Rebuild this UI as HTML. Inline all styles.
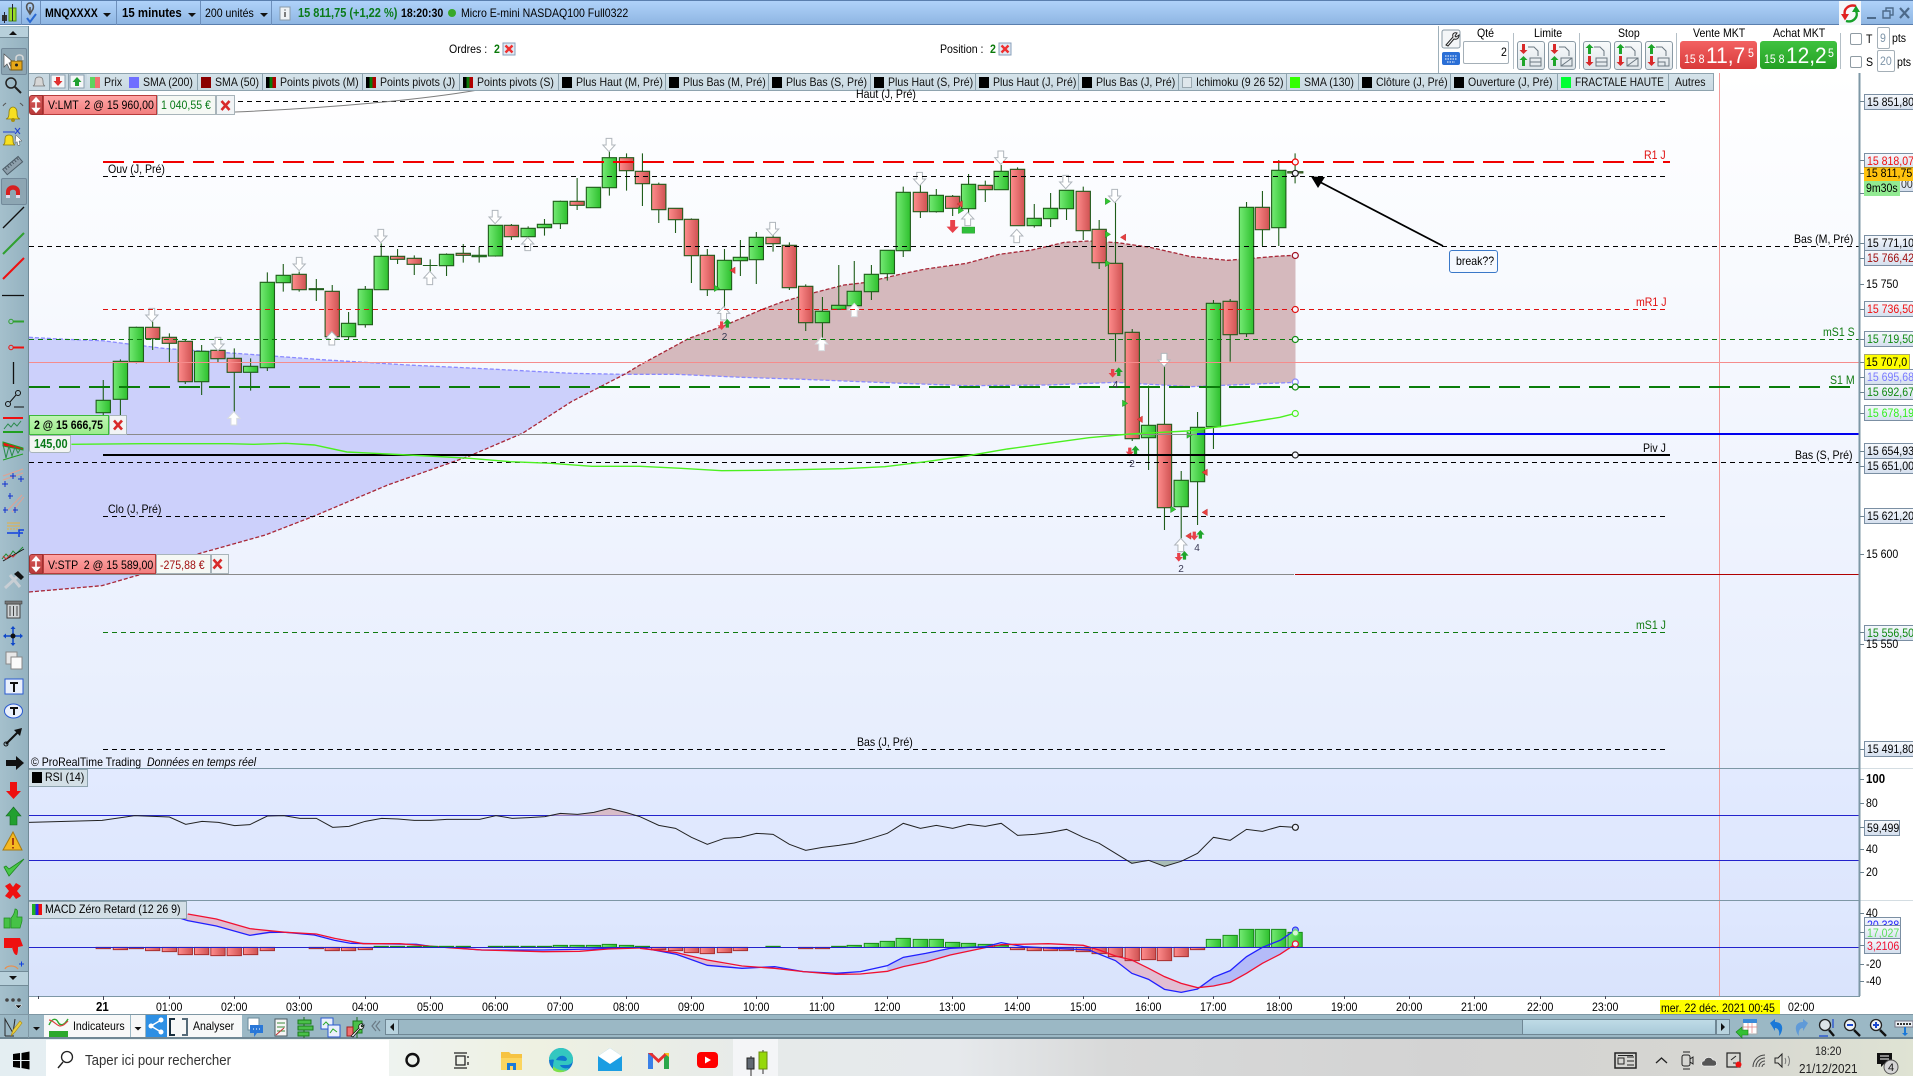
<!DOCTYPE html>
<html><head><meta charset="utf-8"><title>Chart</title>
<style>
html,body{margin:0;padding:0;width:1913px;height:1076px;overflow:hidden;background:#fff}
#p{position:relative;width:1913px;height:1076px;overflow:hidden;font-family:"Liberation Sans",sans-serif;color:#000}
.a{position:absolute}
.t{position:absolute;white-space:pre;font:12px/14px "Liberation Sans",sans-serif;transform:scaleX(.88);transform-origin:0 50%}
.k{position:absolute;top:73px;height:16px;background:linear-gradient(#d5e3ea,#c9d9e2);border:1px solid #8ea3ae;border-left:0}
.k b{position:absolute;left:3px;top:3px;width:10px;height:11px;display:block}
.k i{position:absolute;left:17px;top:1px;font:12px/14px "Liberation Sans",sans-serif;white-space:pre;transform:scaleX(.88);transform-origin:0 50%;color:#111}
.b{position:absolute;left:1864px;width:60px;height:14px;border:1px solid #7b8fa3;background:linear-gradient(#f6f9fd,#d5dfee)}
.b i{position:absolute;left:2px;top:0;font:12px/14px "Liberation Sans",sans-serif;font-style:normal;white-space:pre;transform:scaleX(.88);transform-origin:0 50%}
.tb{position:absolute;top:41px;width:26px;height:27px;border:1px solid #8a9aa5;border-radius:3px;background:linear-gradient(#f8fafb,#dfe6ea)}
svg{position:absolute;left:0;top:0;overflow:visible}
rect.g,rect.r,.nss{vector-effect:non-scaling-stroke}
rect.g{fill:url(#gg);stroke:#1f5d1a;stroke-width:1.1}
rect.r{fill:url(#rg);stroke:#245a1c;stroke-width:1.1}
rect.hg{fill:url(#gg);stroke:#1a8a1a;stroke-width:1;vector-effect:non-scaling-stroke}
rect.hr{fill:url(#rg);stroke:#a83030;stroke-width:1;vector-effect:non-scaling-stroke}
.w{fill:none;stroke:#1f5d1a;stroke-width:1.1;vector-effect:non-scaling-stroke}
</style></head><body><div id="p">

<!-- top bar -->
<div class="a" style="left:0;top:0;width:1913px;height:25px;background:linear-gradient(#afd2fa,#8fb6e2);border-top:1px solid #5a7fae;border-bottom:1px solid #5a7fae;box-sizing:border-box"></div>
<div class="a" style="left:21px;top:1px;width:1px;height:24px;background:#6d8fbb"></div>
<div class="a" style="left:40px;top:1px;width:1px;height:24px;background:#6d8fbb"></div>
<div class="a" style="left:116px;top:1px;width:1px;height:24px;background:#6d8fbb"></div>
<div class="a" style="left:200px;top:1px;width:1px;height:24px;background:#6d8fbb"></div>
<div class="a" style="left:271px;top:1px;width:1px;height:24px;background:#6d8fbb"></div>
<span class="t" style="left:45px;top:6px;font-weight:bold">MNQXXXX</span>
<span class="t" style="left:122px;top:6px;font-weight:bold;font-size:13px">15 minutes</span>
<span class="t" style="left:205px;top:6px">200 unités</span>
<span class="t" style="left:298px;top:6px;font-weight:bold;font-size:12.5px;color:#0a7a1a">15 811,75 (+1,22 %)</span>
<span class="t" style="left:401px;top:6px;font-weight:bold">18:20:30</span>
<span class="t" style="left:461px;top:6px">Micro E-mini NASDAQ100 Full0322</span>
<div class="a" style="left:1839px;top:1px;width:22px;height:24px;background:#f4f7fa"></div>

<!-- white header + trading panel -->
<span class="t" style="left:449px;top:42px;">Ordres :</span>
<span class="t" style="left:494px;top:42px;font-weight:bold;color:#0a7a0a">2</span>
<span class="t" style="left:940px;top:42px;">Position :</span>
<span class="t" style="left:990px;top:42px;font-weight:bold;color:#0a7a0a">2</span>
<div class="a" style="left:1438px;top:26px;width:1px;height:47px;background:#9fb0ba"></div>
<span class="t" style="left:1477px;top:26px">Qté</span>
<span class="t" style="left:1534px;top:26px">Limite</span>
<span class="t" style="left:1618px;top:26px">Stop</span>
<span class="t" style="left:1693px;top:26px">Vente MKT</span>
<span class="t" style="left:1773px;top:26px">Achat MKT</span>
<div class="a" style="left:1463px;top:41px;width:44px;height:21px;border:1px solid #a4afb7;border-radius:2px;background:#fff"></div>
<span class="t" style="left:1501px;top:45px">2</span>
<div class="a" style="left:1513px;top:33px;width:1px;height:36px;background:#b4bfc6"></div>
<div class="a" style="left:1579px;top:33px;width:1px;height:36px;background:#b4bfc6"></div>
<div class="a" style="left:1676px;top:33px;width:1px;height:36px;background:#b4bfc6"></div>
<div class="a" style="left:1840px;top:33px;width:1px;height:36px;background:#b4bfc6"></div>
<div class="tb" style="left:1517px"></div><div class="tb" style="left:1548px"></div>
<div class="tb" style="left:1583px"></div><div class="tb" style="left:1614px"></div><div class="tb" style="left:1645px"></div>
<div class="a" style="left:1680px;top:41px;width:77px;height:28px;border-radius:3px;background:linear-gradient(#f26262,#d93a3a)"></div>
<div class="a" style="left:1760px;top:41px;width:77px;height:28px;border-radius:3px;background:linear-gradient(#3fc23f,#25a025)"></div>
<span class="t" style="left:1684px;top:52px;color:#fff;font-size:12px">15 8</span>
<span class="t" style="left:1706px;top:44px;color:#fff;font-size:22px;line-height:24px;transform:scaleX(.95)">11,7</span>
<span class="t" style="left:1748px;top:46px;color:#fff;font-size:12px">5</span>
<span class="t" style="left:1764px;top:52px;color:#fff;font-size:12px">15 8</span>
<span class="t" style="left:1786px;top:44px;color:#fff;font-size:22px;line-height:24px;transform:scaleX(.95)">12,2</span>
<span class="t" style="left:1828px;top:46px;color:#fff;font-size:12px">5</span>
<div class="a" style="left:1850px;top:33px;width:10px;height:10px;border:1px solid #8f9ba3;border-radius:2px;background:#fff"></div>
<div class="a" style="left:1850px;top:56px;width:10px;height:10px;border:1px solid #8f9ba3;border-radius:2px;background:#fff"></div>
<span class="t" style="left:1866px;top:32px">T</span>
<span class="t" style="left:1866px;top:55px">S</span>
<div class="a" style="left:1877px;top:27px;width:11px;height:20px;border:1px solid #a4afb7;border-radius:2px;background:#fff"></div>
<div class="a" style="left:1877px;top:50px;width:16px;height:20px;border:1px solid #a4afb7;border-radius:2px;background:#fff"></div>
<span class="t" style="left:1880px;top:31px;color:#7d94a8">9</span>
<span class="t" style="left:1880px;top:54px;color:#7d94a8">20</span>
<span class="t" style="left:1892px;top:31px">pts</span>
<span class="t" style="left:1897px;top:55px">pts</span>

<!-- chart backgrounds -->
<div class="a" style="left:29px;top:73px;width:1830px;height:695px;background:linear-gradient(#ffffff,#e6edfd)"></div>
<div class="a" style="left:29px;top:768px;width:1830px;height:132px;background:linear-gradient(#e2eaff,#dde6fd)"></div>
<div class="a" style="left:29px;top:900px;width:1830px;height:96px;background:linear-gradient(#dfe8fe,#d9e3fc)"></div>
<div class="a" style="left:0;top:1014px;width:1913px;height:25px;background:#9bb8c5;border-top:1px solid #7e97a4;border-bottom:2px solid #6f8794;box-sizing:border-box"></div>

<svg width="1913" height="1076" viewBox="0 0 1913 1076">
<defs>
<linearGradient id="gg" x1="0" x2="1" y1="0" y2="0"><stop offset="0" stop-color="#74ea74"/><stop offset="1" stop-color="#2ec02e"/></linearGradient>
<linearGradient id="rg" x1="0" x2="1" y1="0" y2="0"><stop offset="0" stop-color="#ff8d8d"/><stop offset="1" stop-color="#cf5252"/></linearGradient>
<path id="dn" class="nss" d="M-7,-20h14v20h8l-15,20l-15,-20h8z" fill="#fff" stroke="#b0b6bc" stroke-width="1"/>
<path id="up" class="nss" d="M-7,20h14v-20h8l-15,-20l-15,20h8z" fill="#fff" stroke="#b0b6bc" stroke-width="1"/>
<path id="upw" class="nss" d="M-7,20h14v-20h8l-15,-20l-15,20h8z" fill="#fff" stroke="#d8dce0" stroke-width="1"/>
<path id="rd" d="M-4,-13h8v12h6l-10,14l-10,-14h6z" fill="#e8404a"/>
<path id="gu" d="M-4,13h8v-12h6l-10,-14l-10,14h6z" fill="#1ea52a"/>
<path id="tg" d="M-5,-10L8,0L-5,10z" fill="#30c830" stroke="#1a7a1a" stroke-width="1"/>
<path id="tr" d="M5,-10L-8,0L5,10z" fill="#e84040" stroke="#b02020" stroke-width="1"/>
</defs>

<!-- cloud + candles in zoom coordinates -->
<g transform="translate(0 130) scale(.40816 .33333)">
<polygon fill="#ccd0fb" points="71,622 160,628 250,632 400,655 600,672 800,690 1000,705 1200,717 1400,730 1530,733 1400,815 1280,910 1150,978 1100,1000 950,1065 770,1158 650,1215 490,1270 340,1335 250,1367 71,1386"/>
<polygon fill="#d5b9bd" points="1530,733 1568,705 1688,625 1768,590 1868,538 1918,515 1988,490 2068,465 2118,458 2208,432 2268,417 2368,400 2448,373 2528,360 2608,337 2668,333 2738,338 2818,352 2918,380 3008,391 3136,378 3174,376 3174,757 2918,770 2733,757 2568,765 2368,767 2168,758 1968,748 1818,742 1658,733 1568,733"/>
<polyline class="nss" fill="none" stroke="#8a8aff" stroke-width="1.3" stroke-dasharray="4 2" points="71,622 160,628 250,632 400,655 600,672 800,690 1000,705 1200,717 1400,730 1530,733 1568,733 1658,733 1818,742 1968,748 2168,758 2368,767 2568,765 2733,757 2918,770 3174,757"/>
<polyline class="nss" fill="none" stroke="#a82838" stroke-width="1.3" stroke-dasharray="4 2" points="71,1386 250,1367 340,1335 490,1270 650,1215 770,1158 950,1065 1100,1000 1150,978 1280,910 1400,815 1530,733 1568,705 1688,625 1768,590 1868,538 1918,515 1988,490 2068,465 2118,458 2208,432 2268,417 2368,400 2448,373 2528,360 2608,337 2668,333 2738,338 2818,352 2918,380 3008,391 3136,378 3174,376"/>

<path class="w" d="M253 750V811M253 848V860M295 688V694M295 808V860M334 590V592M334 695V700M374 575V592M374 626V660M415 610V622M415 640V698M454 630V634M454 755V762M494 645V664M494 755V795M534 655V661M534 686V698M574 655V685M574 727V845M614 685V709M614 727V782M655 427V457M655 713V723M694 402V436M694 458V485M733 425V433M733 479V485M775 447V513M814 465V484M814 620V625M854 546V580M854 620V628M895 468V478M895 584V593M934 340V379M974 357V402M1015 376V385M1015 403V435M1054 388V425M1036 406.5H1072M1094 370V373M1094 407V438M1135 342V398M1174 350V398M1214 285V286M1214 378V380M1253 282V286M1253 320V330M1294 289V295M1334 267V283M1334 293V317M1373 212V214M1373 281V297M1414 144V214M1414 226V240M1493 65V83M1493 173V197M1535 70V83M1535 122V182"/>
<rect class="g" x="235.5" y="811" width="35" height="37"/><rect class="g" x="277.5" y="694" width="35" height="114"/><rect class="g" x="316.5" y="592" width="35" height="103"/><rect class="r" x="356.5" y="592" width="35" height="34"/><rect class="r" x="397.5" y="622" width="35" height="18"/><rect class="r" x="436.5" y="634" width="35" height="121"/><rect class="g" x="476.5" y="664" width="35" height="91"/><rect class="r" x="516.5" y="661" width="35" height="25"/><rect class="r" x="556.5" y="685" width="35" height="42"/><rect class="g" x="596.5" y="709" width="35" height="18"/><rect class="g" x="637.5" y="457" width="35" height="256"/><rect class="g" x="676.5" y="436" width="35" height="22"/><rect class="r" x="715.5" y="433" width="35" height="46"/><rect class="g" x="757.5" y="476" width="35" height="3"/><rect class="r" x="796.5" y="484" width="35" height="136"/><rect class="g" x="836.5" y="580" width="35" height="40"/><rect class="g" x="877.5" y="478" width="35" height="106"/><rect class="g" x="916.5" y="379" width="35" height="100"/><rect class="r" x="956.5" y="379" width="35" height="9"/><rect class="r" x="997.5" y="385" width="35" height="18"/><rect class="g" x="1076.5" y="373" width="35" height="34"/><rect class="r" x="1117.5" y="370" width="35" height="6"/><rect class="g" x="1156.5" y="376" width="35" height="4"/><rect class="g" x="1196.5" y="286" width="35" height="92"/><rect class="r" x="1235.5" y="286" width="35" height="34"/><rect class="g" x="1276.5" y="295" width="35" height="25"/><rect class="g" x="1316.5" y="283" width="35" height="10"/><rect class="g" x="1355.5" y="214" width="35" height="67"/><rect class="r" x="1396.5" y="214" width="35" height="12"/><rect class="g" x="1436.5" y="172" width="35" height="61"/><rect class="g" x="1475.5" y="83" width="35" height="90"/><rect class="r" x="1517.5" y="83" width="35" height="39"/>
<use href="#dn" x="372" y="555"/><use href="#dn" x="733" y="402"/><use href="#dn" x="534" y="642"/><use href="#dn" x="933" y="318"/><use href="#dn" x="1213" y="261"/><use href="#dn" x="1492" y="45"/>
<use href="#up" x="813" y="625"/><use href="#up" x="1053" y="444"/><use href="#up" x="1293" y="342"/><use href="#upw" x="573" y="865"/>

<g transform="translate(1568 0)">
<path class="w" d="M6 70V124M6 161V228M46 158V163M46 239V279M87 269V309M126 265V268M126 377V459M165 357V376M165 479V498M207 357V391M207 479V530M246 330V438M285 306V322M285 389V462M326 310V322M326 341V365M366 337V346M366 473V480M406 463V469M406 578V603M447 501V544M447 578V625M487 405V526M525 393V484M525 527V530M567 405V433M567 485V510M606 431V452M645 170V187M645 362V381M687 165V187M687 245V264M726 177V196M726 245V248M766 195V199M766 235V258M805 132V163M805 236V250M846 152V166M846 179V216M885 105V124M925 112V118M966 222V265M966 287V293M1006 189V235M1006 266V291M1045 236V270M1086 170V184M1086 302V330M1125 270V298M1125 398V417M1165 218V400M1165 611V695M1206 597V607M1206 926V933M1246 767V886M1246 923V1020M1285 710V883M1285 1133V1200M1326 1023V1051M1326 1130V1225M1366 846V892M1366 1055V1185M1405 510V520M1405 890V957M1446 507V514M1446 614V695M1486 216V232M1486 611V621M1525 183V232M1525 299V348M1565 90V121M1565 293V348M1605 70V160"/>
<rect class="r" x="-11.5" y="124" width="35" height="37"/><rect class="r" x="28.5" y="163" width="35" height="76"/><rect class="r" x="69.5" y="235" width="35" height="34"/><rect class="r" x="108.5" y="268" width="35" height="109"/><rect class="r" x="147.5" y="376" width="35" height="103"/><rect class="g" x="189.5" y="391" width="35" height="88"/><rect class="g" x="228.5" y="382" width="35" height="10"/><rect class="g" x="267.5" y="322" width="35" height="67"/><rect class="r" x="308.5" y="322" width="35" height="19"/><rect class="r" x="348.5" y="346" width="35" height="127"/><rect class="r" x="388.5" y="469" width="35" height="109"/><rect class="g" x="429.5" y="544" width="35" height="34"/><rect class="g" x="469.5" y="526" width="35" height="12"/><rect class="g" x="507.5" y="484" width="35" height="43"/><rect class="g" x="549.5" y="433" width="35" height="52"/><rect class="g" x="588.5" y="361" width="35" height="70"/><rect class="g" x="627.5" y="187" width="35" height="175"/><rect class="r" x="669.5" y="187" width="35" height="58"/><rect class="g" x="708.5" y="196" width="35" height="49"/><rect class="r" x="748.5" y="199" width="35" height="36"/><rect class="g" x="787.5" y="163" width="35" height="73"/><rect class="r" x="828.5" y="166" width="35" height="13"/><rect class="g" x="867.5" y="124" width="35" height="55"/><rect class="r" x="907.5" y="118" width="35" height="169"/><rect class="g" x="948.5" y="265" width="35" height="22"/><rect class="g" x="988.5" y="235" width="35" height="31"/><rect class="g" x="1027.5" y="181" width="35" height="55"/><rect class="r" x="1068.5" y="184" width="35" height="118"/><rect class="r" x="1107.5" y="298" width="35" height="100"/><rect class="r" x="1147.5" y="400" width="35" height="211"/><rect class="r" x="1188.5" y="607" width="35" height="319"/><rect class="g" x="1228.5" y="886" width="35" height="37"/><rect class="r" x="1267.5" y="883" width="35" height="250"/><rect class="g" x="1308.5" y="1051" width="35" height="79"/><rect class="g" x="1348.5" y="892" width="35" height="163"/><rect class="g" x="1387.5" y="520" width="35" height="370"/><rect class="r" x="1428.5" y="514" width="35" height="100"/><rect class="g" x="1468.5" y="232" width="35" height="379"/><rect class="r" x="1507.5" y="232" width="35" height="67"/><rect class="g" x="1547.5" y="121" width="35" height="172"/><rect class="r" x="1587" y="125" width="37" height="4"/>
<use href="#dn" x="325" y="297"/><use href="#dn" x="685" y="147"/><use href="#dn" x="884" y="83"/><use href="#dn" x="1043" y="156"/><use href="#dn" x="1163" y="198"/><use href="#dn" x="1284" y="690"/>
<use href="#up" x="205" y="550"/><use href="#upw" x="445" y="642"/><use href="#upw" x="525" y="540"/><use href="#up" x="803" y="267"/><use href="#up" x="923" y="318"/><use href="#up" x="1325" y="1245"/>
<use href="#tg" x="187" y="475"/><use href="#tg" x="1145" y="214"/><use href="#tg" x="1145" y="313"/><use href="#tg" x="1145" y="400"/><use href="#tg" x="1187" y="820"/><use href="#tg" x="785" y="241"/><use href="#tg" x="1305" y="1138"/><use href="#tg" x="1345" y="915"/>
<use href="#tr" x="228" y="421"/><use href="#tr" x="785" y="222"/><use href="#tr" x="1185" y="322"/><use href="#tr" x="1226" y="868"/><use href="#tr" x="1385" y="1027"/><use href="#tr" x="1385" y="1147"/><use href="#tr" x="1345" y="1218"/>
<use href="#rd" x="200" y="587"/><use href="#gu" x="214" y="580"/><use href="#rd" x="1158" y="730"/><use href="#gu" x="1173" y="725"/><use href="#rd" x="1200" y="966"/><use href="#gu" x="1214" y="960"/><use href="#rd" x="1358" y="1218"/><use href="#gu" x="1373" y="1213"/><use href="#rd" x="1320" y="1282"/><use href="#gu" x="1334" y="1276"/>
<path d="M760,270h12v20h9l-15,19l-15,-19h9z" fill="#e8404a"/>
<rect x="789" y="291" width="31" height="19" fill="#2fbf3a" stroke="#1a8a1a"/>
</g>
</g>

<!-- price lines -->
<g fill="none" shape-rendering="crispEdges">
<path d="M103 101.5H1668M103 176.5H1667M29 246.5H1859M29 462.5H1859M103 516.5H1667M103 749.5H1667" stroke="#000" stroke-dasharray="5 4"/>
<path d="M103 309.5H1667" stroke="#e01010" stroke-dasharray="5 4"/>
<path d="M29 339.5H1859M103 632.5H1667" stroke="#107a10" stroke-dasharray="5 4"/>
<path d="M29 362.5H1859" stroke="#f58c8c"/>
<path d="M1719.5 73V996" stroke="#f29a9a"/>
<path d="M103 162H1670" stroke="#f00000" stroke-width="2" stroke-dasharray="21 9"/>
<path d="M29 387H1850" stroke="#0a7d0a" stroke-width="2" stroke-dasharray="21 9"/>
<path d="M29 434.5H1197" stroke="#8a8a8a"/>
<path d="M1197 434H1859" stroke="#0000ee" stroke-width="2"/>
<path d="M103 455H1670" stroke="#000" stroke-width="2"/>
<path d="M29 574.5H1294" stroke="#8a8a8a"/>
<path d="M1295 574.5H1859" stroke="#b00000"/>
</g>
<g transform="translate(0 130) scale(.40816 .33333)"><polyline class="nss" fill="none" stroke="#4cf020" stroke-width="1.4" points="175,943 350,941 560,941 620,943 700,940 770,945 850,966 950,972 1050,978 1150,985 1250,995 1350,1000 1450,1009 1568,1009 1668,1015 1768,1022 1868,1021 2068,1016 2168,1010 2268,995 2368,978 2468,957 2568,940 2668,923 2768,912 2908,903 3018,885 3136,862 3174,850"/></g>
<path d="M235 112C330 108 420 100 478 90" fill="none" stroke="#7d7d7d"/>
<!-- small count numbers under fractal arrows -->
<g font-family="'Liberation Sans',sans-serif" font-size="10" fill="#3a3a55" text-anchor="middle">
<text x="724.500" y="340">2</text><text x="1115.500" y="388">4</text><text x="1132" y="467">2</text><text x="1197" y="551">4</text><text x="1181" y="572">2</text>
</g>
<!-- end-of-series markers -->
<g fill="#f6f8ff" stroke-width="1.2">
<circle cx="1295.3" cy="162" r="3" stroke="#f00000"/><circle cx="1295.3" cy="173.3" r="3" stroke="#222"/><circle cx="1295.3" cy="255.5" r="3" stroke="#a01020"/><circle cx="1295.3" cy="309.5" r="3" stroke="#e01010"/><circle cx="1295.3" cy="339.5" r="3" stroke="#108a10"/><circle cx="1295.3" cy="382" r="3" stroke="#8a8aff"/><circle cx="1295.3" cy="387" r="3" stroke="#108a10"/><circle cx="1295.3" cy="413.5" r="3" stroke="#4cf020"/><circle cx="1295.3" cy="455" r="3" stroke="#222"/>
</g>
<!-- break arrow -->
<path d="M1443 246L1318 181" stroke="#000" stroke-width="1.8" fill="none"/>
<path d="M1311 176.5L1325 177L1318 188z" fill="#000"/>

<!-- RSI -->
<g shape-rendering="crispEdges" fill="none"><path d="M29 815.7H1859M29 860.3H1859M29 947.3H1859" stroke="#2222cc"/></g>
<g transform="translate(0 750) scale(.40816 .33333)">
<polygon fill="#d8bcc8" points="1340,197 1373,190 1415,193 1455,187 1493,175 1535,188 1555,197"/>
<polyline class="nss" fill="none" stroke="#222" stroke-width="1" points="71,217 250,211 330,197 415,201 455,223 495,214 535,217 575,227 612,224 655,198 695,197 735,205 775,205 815,232 855,229 895,214 935,205 975,207 1015,211 1055,211 1095,208 1135,208 1175,208 1215,197 1255,205 1295,203 1335,200 1373,190 1415,193 1455,187 1493,175 1535,188 1568,200"/>
<!-- MACD fills and bars -->
<polygon fill="#e2bdd2" points="437,503 460,492 530,507 612,536 700,547 612,556 530,528 460,512"/>
<g fill="none"><polyline class="nss" stroke="#2020ff" stroke-width="1.3" points="437,503 460,512 530,528 612,556 660,547 700,547 770,555 820,571 860,580 960,582 1020,583 1060,590 1100,592 1180,600 1330,600 1450,597 1568,592"/><polyline class="nss" stroke="#f01030" stroke-width="1.3" points="460,492 530,507 612,536 700,547 775,552 820,565 890,581 980,581 1020,585 1100,593 1180,600 1330,605 1420,604 1490,597 1568,594"/></g>
<g id="hb">
<rect class="hr" x="235.5" y="592" width="35" height="4"/><rect class="hr" x="277.5" y="592" width="35" height="7"/><rect class="hr" x="316.5" y="592" width="35" height="4"/><rect class="hr" x="356.5" y="592" width="35" height="10"/><rect class="hr" x="397.5" y="592" width="35" height="13"/><rect class="hr" x="436.5" y="592" width="35" height="22"/><rect class="hr" x="476.5" y="592" width="35" height="22"/><rect class="hr" x="516.5" y="592" width="35" height="25"/><rect class="hr" x="556.5" y="592" width="35" height="25"/><rect class="hr" x="596.5" y="592" width="35" height="22"/><rect class="hr" x="637.5" y="592" width="35" height="10"/><rect class="hr" x="757.5" y="592" width="35" height="4"/><rect class="hr" x="796.5" y="592" width="35" height="10"/><rect class="hr" x="836.5" y="592" width="35" height="10"/><rect class="hr" x="877.5" y="592" width="35" height="7"/>
<rect class="hg" x="916.5" y="589" width="35" height="3"/><rect class="hg" x="956.5" y="589" width="35" height="3"/><rect class="hg" x="997.5" y="589" width="35" height="3"/><rect class="hg" x="1036.5" y="589" width="35" height="3"/><rect class="hg" x="1076.5" y="589" width="35" height="3"/><rect class="hg" x="1117.5" y="589" width="35" height="3"/><rect class="hg" x="1196.5" y="589" width="35" height="3"/><rect class="hg" x="1235.5" y="589" width="35" height="3"/><rect class="hg" x="1276.5" y="589" width="35" height="3"/><rect class="hg" x="1316.5" y="589" width="35" height="3"/><rect class="hg" x="1355.5" y="586" width="35" height="6"/><rect class="hg" x="1396.5" y="586" width="35" height="6"/><rect class="hg" x="1436.5" y="586" width="35" height="6"/><rect class="hg" x="1475.5" y="583" width="35" height="9"/><rect class="hg" x="1517.5" y="586" width="35" height="6"/>
</g>
<g transform="translate(1568 0)">
<polygon fill="#a9bdb6" points="1195,331 1205,340 1246,331 1285,349 1326,334 1330,331"/>
<polygon fill="#e2bdd2" points="0,592 90,613 165,646 250,655 165,630 90,608 0,595"/>
<polygon fill="#bcc2f6" points="606,647 645,622 700,610 760,595 846,592 760,615 700,636 645,650 606,664"/>
<polygon fill="#e2bdd2" points="1125,600 1165,632 1205,670 1246,688 1285,718 1326,727 1366,713 1326,700 1285,680 1246,655 1205,630 1165,618"/>
<polygon fill="#b4bbf8" points="1366,713 1405,682 1446,662 1486,620 1525,592 1605,592 1605,583 1568,613 1525,640 1486,670 1446,697 1405,708"/>
<polyline class="nss" fill="none" stroke="#222" stroke-width="1" points="0,200 46,226 87,235 126,262 165,283 207,265 246,262 285,250 326,253 366,283 406,301 447,292 487,286 525,279 567,265 606,250 645,220 687,235 726,226 766,235 805,223 846,229 885,220 925,256 966,253 1006,247 1045,238 1086,262 1125,280 1165,310 1205,340 1246,331 1285,349 1326,334 1366,310 1405,262 1446,271 1486,238 1525,244 1568,229 1605,232"/>
<rect class="hg" x="-11.5" y="589" width="35" height="3"/><rect class="hr" x="28.5" y="592" width="35" height="7"/><rect class="hr" x="69.5" y="592" width="35" height="10"/><rect class="hr" x="108.5" y="592" width="35" height="16"/><rect class="hr" x="147.5" y="592" width="35" height="19"/><rect class="hr" x="189.5" y="592" width="35" height="16"/><rect class="hr" x="228.5" y="592" width="35" height="10"/><rect class="hg" x="308.5" y="589" width="35" height="3"/><rect class="hr" x="388.5" y="592" width="35" height="4"/><rect class="hr" x="429.5" y="592" width="35" height="4"/><rect class="hg" x="469.5" y="589" width="35" height="3"/><rect class="hg" x="507.5" y="586" width="35" height="6"/><rect class="hg" x="549.5" y="580" width="35" height="12"/><rect class="hg" x="588.5" y="574" width="35" height="18"/><rect class="hg" x="627.5" y="565" width="35" height="27"/><rect class="hg" x="669.5" y="568" width="35" height="24"/><rect class="hg" x="708.5" y="568" width="35" height="24"/><rect class="hg" x="748.5" y="577" width="35" height="15"/><rect class="hg" x="787.5" y="580" width="35" height="12"/><rect class="hg" x="828.5" y="583" width="35" height="9"/><rect class="hg" x="867.5" y="586" width="35" height="6"/><rect class="hr" x="907.5" y="592" width="35" height="7"/><rect class="hr" x="948.5" y="592" width="35" height="10"/><rect class="hr" x="988.5" y="592" width="35" height="10"/><rect class="hr" x="1027.5" y="592" width="35" height="10"/><rect class="hr" x="1068.5" y="592" width="35" height="13"/><rect class="hr" x="1107.5" y="592" width="35" height="19"/><rect class="hr" x="1147.5" y="592" width="35" height="28"/><rect class="hr" x="1188.5" y="592" width="35" height="40"/><rect class="hr" x="1228.5" y="592" width="35" height="37"/><rect class="hr" x="1267.5" y="592" width="35" height="40"/><rect class="hr" x="1308.5" y="592" width="35" height="28"/><rect class="hr" x="1348.5" y="592" width="35" height="7"/><rect class="hg" x="1387.5" y="568" width="35" height="24"/><rect class="hg" x="1428.5" y="556" width="35" height="36"/><rect class="hg" x="1468.5" y="538" width="35" height="54"/><rect class="hg" x="1507.5" y="538" width="35" height="54"/><rect class="hg" x="1547.5" y="538" width="35" height="54"/><rect class="hg" x="1587.5" y="547" width="35" height="45"/>
<g fill="none"><polyline class="nss" stroke="#2020ff" stroke-width="1.3" points="0,592 90,613 165,646 250,655 330,650 400,665 480,670 540,665 606,647 645,622 700,610 760,595 846,590 885,578 940,590 1000,594 1100,600 1165,632 1205,670 1246,688 1285,718 1326,727 1366,717 1405,682 1446,662 1486,620 1525,592 1570,570 1605,540"/><polyline class="nss" stroke="#f01030" stroke-width="1.3" points="0,595 90,608 165,630 250,648 330,655 400,665 480,673 540,672 606,664 645,650 700,636 760,615 846,593 885,584 1000,581 1086,586 1125,600 1165,618 1205,630 1246,655 1285,680 1326,700 1366,713 1405,708 1446,697 1486,670 1525,640 1568,613 1605,583"/></g>
</g>
</g>
<path d="M29 947.3H1859" stroke="#2222cc" shape-rendering="crispEdges"/>
<circle cx="1295.4" cy="827.3" r="3" fill="#eef2ff" stroke="#222" stroke-width="1.2"/>
<circle cx="1295.4" cy="930" r="3" fill="#8ad" stroke="#2020ff" stroke-width="1"/>
<circle cx="1295.4" cy="933" r="3" fill="#d6f5d6" stroke="#5ee05e" stroke-width="1"/>
<circle cx="1295.4" cy="944" r="3" fill="#eef2ff" stroke="#f01030" stroke-width="1.2"/>
<!-- panel separators and axes -->
<g shape-rendering="crispEdges" fill="none">
<path d="M29 768.5H1860M29 900.5H1860M29 996.5H1860" stroke="#7d97a5"/>
<path d="M1860 768.5H1913M1860 900.5H1913" stroke="#d4dde2"/>
<path d="M1859.5 73V996" stroke="#7d97a5" stroke-width="2"/>
<path d="M1860 101.5h4M1860 160.5h4M1860 173.5h4M1860 193.5h4M1860 243.5h4M1860 284.5h4M1860 258.5h4M1860 309.5h4M1860 339.5h4M1860 362.5h4M1860 377.5h4M1860 392.5h4M1860 413.5h4M1860 451.5h4M1860 466.5h4M1860 516.5h4M1860 554.5h4M1860 632.5h4M1860 644.5h4M1860 749.5h4M1860 779.5h4M1860 803.5h4M1860 827.5h4M1860 849.5h4M1860 872.5h4M1860 913.5h4M1860 932.5h4M1860 945.5h4M1860 964.5h4M1860 981.5h4" stroke="#6c8290"/>
<path d="M103.5 996v4M38.5 996v3M169.5 996v3M234.5 996v3M299.5 996v3M365.5 996v3M430.5 996v3M495.5 996v3M560.5 996v3M626.5 996v3M691.5 996v3M756.5 996v3M822.5 996v3M887.5 996v3M952.5 996v3M1017.5 996v3M1083.5 996v3M1148.5 996v3M1213.5 996v3M1279.5 996v3M1344.5 996v3M1409.5 996v3M1474.5 996v3M1540.5 996v3M1605.5 996v3" stroke="#445"/>
</g>

<!-- top bar icons -->
<rect x="2" y="15" width="5" height="6" fill="#333"/><rect x="9" y="8" width="7" height="13" fill="#9adb2a" stroke="#4c8a14"/><path d="M12.5 4V21M4.5 12V23" stroke="#223"/>
<path d="M30 3c-3 0-4 3-3 6l3 5 3-5c1-3 0-6-3-6zM30 7v6" fill="none" stroke="#555" stroke-width="1.6"/><path d="M27 18l3 4 6-8" fill="none" stroke="#2a68d0" stroke-width="2"/>
<path d="M103 14l4 4 4-4zM188 14l4 4 4-4zM260 14l4 4 4-4z" fill="#111" transform="translate(0 -1)"/>
<rect x="280" y="7" width="10" height="13" fill="#eef2f5" stroke="#8a9aa8"/><path d="M285 9.5v1M285 12v5" stroke="#555" stroke-width="1.5"/>
<circle cx="452" cy="13" r="4" fill="#36a82a"/>
<path d="M1856 6C1849 4 1843 9 1845 15" fill="none" stroke="#e02020" stroke-width="2.400"/><path d="M1841 14h8l-4 6.500z" fill="#e02020"/>
<path d="M1846 21C1853 23 1859 17 1856 11" fill="none" stroke="#16a02a" stroke-width="2.400"/><path d="M1852 12h8l-4-6.500z" fill="#16a02a"/>
<path d="M1867 18h9" stroke="#4d6a8a" stroke-width="2"/>
<path d="M1883 11h7v7h-7zM1886 11V8h7v7h-3" fill="none" stroke="#4d6a8a" stroke-width="1.4"/>
<path d="M1900 8l9 10M1909 8l-9 10" stroke="#4d6a8a" stroke-width="2.2"/>

<!-- order icons -->
<rect x="503" y="43" width="12" height="12" fill="#dfe9f3" stroke="#8aa0bb"/><path d="M505.500 45.500l7 7M512.500 45.500l-7 7" stroke="#ee3030" stroke-width="2.400"/>
<rect x="999" y="43" width="12" height="12" fill="#dfe9f3" stroke="#8aa0bb"/><path d="M1001.500 45.500l7 7M1008.500 45.500l-7 7" stroke="#ee3030" stroke-width="2.400"/>
<rect x="1442" y="30" width="18" height="18" rx="2" fill="#f4f6f8" stroke="#8a9aa5"/><path d="M1446 45l7-8c-1-3 1-5 4-4l-2 3 1 1 3-2c0 3-2 5-5 4l-6 7z" fill="none" stroke="#222" stroke-width="1"/>
<rect x="1442" y="52" width="18" height="13" rx="2" fill="#2b6fd6"/><path d="M1445 56h12M1445 59h12M1447 62h8" stroke="#fff" stroke-dasharray="1.500 1"/>
<!-- trade buttons icons -->
<g id="tb1"><path d="M1522 44h3v6h2.500l-4 4-4-4h2.500z" fill="#d82a2a"/><path d="M1522 66v-6h-2.500l4-4 4 4h-2.500v6z" fill="#1ea52a"/><path d="M1528 47h6l4 4v5M1530 58h11v8h-11zM1530 62h11" fill="none" stroke="#6a7780"/></g>
<g transform="translate(31 0)"><path d="M1522 44h3v6h2.500l-4 4-4-4h2.500z" fill="#d82a2a"/><path d="M1522 66v-6h-2.500l4-4 4 4h-2.500v6z" fill="#1ea52a"/><path d="M1528 47h6l4 4v5M1530 58h11v8h-11zM1530 66l11-8" fill="none" stroke="#6a7780"/></g>
<g transform="translate(66 0)"><path d="M1522 54v-6h-2.500l4-4 4 4h-2.500v6z" fill="#1ea52a"/><path d="M1522 56h3v6h2.500l-4 4-4-4h2.500z" fill="#d82a2a"/><path d="M1528 47h6l4 4v5M1530 58h11v8h-11zM1530 62h11" fill="none" stroke="#6a7780"/></g>
<g transform="translate(97 0)"><path d="M1522 54v-6h-2.500l4-4 4 4h-2.500v6z" fill="#1ea52a"/><path d="M1522 56h3v6h2.500l-4 4-4-4h2.500z" fill="#d82a2a"/><path d="M1528 47h6l4 4v5M1530 58h11v8h-11zM1530 66l11-8" fill="none" stroke="#6a7780"/></g>
<g transform="translate(128 0)"><path d="M1522 54v-6h-2.500l4-4 4 4h-2.500v6z" fill="#1ea52a"/><path d="M1522 56h3v6h2.500l-4 4-4-4h2.500z" fill="#d82a2a"/><path d="M1528 47h6l4 4v5M1530 58h11v8h-11zM1530 62h7v4" fill="none" stroke="#6a7780"/></g>
</svg>

<!-- left toolbar -->
<div class="a" style="left:0;top:26px;width:28px;height:988px;background:linear-gradient(90deg,#a5c0cc,#94b2c0);border-right:1px solid #728b98"></div>
<div class="a" style="left:0;top:971px;width:28px;height:13px;background:#b7d0db;border-top:1px solid #728b98;border-bottom:1px solid #728b98"></div>
<div class="a" style="left:0;top:27px;width:28px;height:10px;background:#b7d0db;border-bottom:1px solid #728b98"></div>
<div class="a" style="left:1px;top:48px;width:24px;height:25px;background:#8da6b3;border:1px solid #72899a;border-radius:2px"></div>
<div class="a" style="left:1px;top:178px;width:24px;height:25px;background:#8da6b3;border:1px solid #72899a;border-radius:2px"></div>
<svg width="28" height="1014" viewBox="0 0 28 1014">
<path d="M9 35l4-4 4 4z" fill="#111"/>
<path d="M4 54l9 8-4 1 3 6-2 1-3-6-3 3z" fill="#fff" stroke="#555" stroke-width=".7"/><rect x="11" y="61" width="11" height="9" fill="#e8a818" stroke="#7a5a10"/><path d="M16 61v-3c0-4 7-4 7 0v2" fill="none" stroke="#d8d8d8" stroke-width="1.500"/><circle cx="16.500" cy="65" r="1.500" fill="#222"/>
<circle cx="11" cy="83" r="5" fill="none" stroke="#222" stroke-width="1.500"/><path d="M15 87l6 6" stroke="#222" stroke-width="2"/>
<path d="M6 119c3-1 3-4 3-7 0-3 2-5 4-5s4 2 4 5c0 3 0 6 3 7z" fill="#f8e020" stroke="#8a7a10" stroke-width=".8"/><circle cx="13" cy="120" r="2" fill="#a89010"/><path d="M3 106c1-2 2-2 3-3M23 106c-1-2-2-2-3-3" stroke="#555"/>
<path d="M3 145c2-1 2-3 2-6 0-3 2-4 4-4s4 1 4 4c0 3 0 5 2 6z" fill="#f8e020" stroke="#8a7a10" stroke-width=".8"/><path d="M3 132h12M15 128l5 6M20 128l-5 6" stroke="#2040d0"/><path d="M16 135l6 6h-3l1 4-2 .5-1-4-2 2z" fill="#fff" stroke="#555" stroke-width=".5"/>
<g transform="rotate(-40 13 166)"><rect x="3" y="162" width="20" height="7" fill="#8ea0ac" stroke="#4d5d68"/><path d="M6 162v3M9 162v3M12 162v3M15 162v3M18 162v3M21 162v3" stroke="#4d5d68"/></g>
<path d="M6 198v-6c0-9 14-9 14 0v6h-4v-6c0-3-6-3-6 0v6z" fill="#d82020"/><rect x="6" y="195" width="4" height="3" fill="#dde"/><rect x="16" y="195" width="4" height="3" fill="#dde"/>
<path d="M3 228L24 207" stroke="#111" stroke-width="1.300"/>
<path d="M3 254L24 233" stroke="#30a030" stroke-width="2"/>
<path d="M3 279L24 258" stroke="#ee1010" stroke-width="2"/>
<path d="M2 295.500H24" stroke="#111" stroke-width="1.300"/>
<path d="M13 321.500H24" stroke="#30a030" stroke-width="2"/><circle cx="11" cy="321.500" r="2.200" fill="none" stroke="#30a030"/>
<path d="M13 347.500H24" stroke="#ee1010" stroke-width="2"/><circle cx="11" cy="347.500" r="2.200" fill="none" stroke="#ee1010"/>
<path d="M13.500 362V384" stroke="#111" stroke-width="1.300"/>
<circle cx="8" cy="404" r="2.500" fill="none" stroke="#111"/><circle cx="18" cy="393" r="2.500" fill="none" stroke="#111"/><path d="M10 402l6-7M14 407h10" stroke="#111"/>
<path d="M3 418h20" stroke="#ee1010" stroke-width="2"/><path d="M3 432h20" stroke="#20a020" stroke-width="2"/><path d="M4 429l4-5 3 3 3-4 3 3 4-5" fill="none" stroke="#2a8a4a"/>
<path d="M3 442l20 6v2l-20-4zM3 460l20-6" fill="#ee1010" stroke="#20a020"/><path d="M3 444l3 14 3-12 3 10 3-9 3 6 3-5" fill="none" stroke="#2a8a4a"/>
<path d="M3 480l20-7M3 476l20-7" stroke="#e4a090"/><path d="M2 484h6M5 481v6M10 476h6M13 473v6M18 479h6M21 476v6" stroke="#1030d0"/>
<path d="M8 510l14-15M12 512l12-15" stroke="#e4a090"/><path d="M8 496h5M10 493v6M3 510h5M5 507v6M13 510h5M15 507v6" stroke="#1030d0"/>
<path d="M7 523h13M7 526h13" stroke="#e8b040"/><path d="M7 529h13" stroke="#e8b040" stroke-dasharray="2 1"/><path d="M7 533h11M19 537v-7h5M19 533h4" stroke="#1040e0" stroke-width="1.500" fill="none"/>
<path d="M2 559l4-5 3 3 4-6 3 3 3-3 4-4" fill="none" stroke="#1f8a30"/><path d="M3 561L24 549" stroke="#111"/><path d="M3 556l3 3 4-4 3 2 3-3" fill="none" stroke="#d03030"/>
<path d="M5 588l12-11M10 575l10 12" stroke="#c8ced4" stroke-width="3"/><path d="M14 574l4-3 6 6-3 3z" fill="#111"/>
<rect x="7" y="604" width="13" height="14" fill="#d0d4d6" stroke="#444"/><rect x="5" y="601" width="17" height="3" fill="#777" stroke="#333" stroke-width=".5"/><path d="M10 606v10M13.500 606v10M17 606v10" stroke="#444"/>
<path d="M13 628v16M5 636h16" stroke="#1048c8" stroke-width="1.500"/><path d="M13 626l-2.500 3h5zM13 646l-2.500-3h5zM3 636l3-2.500v5zM23 636l-3-2.500v5z" fill="#1048c8"/><circle cx="13" cy="636" r="2.500" fill="#111"/>
<rect x="6" y="652" width="11" height="12" fill="#e8e8e8" stroke="#888"/><rect x="11" y="657" width="11" height="12" fill="#fbfbfb" stroke="#888"/>
<rect x="5" y="679" width="18" height="15" fill="#eaf0fb" stroke="#2a5ad0"/><path d="M10 682h8v2h-3v8h-2v-8h-3z" fill="#111"/>
<ellipse cx="13.500" cy="711" rx="9" ry="7" fill="#eaf0fb" stroke="#2a5ad0"/><path d="M10 707h8v2h-3v6h-2v-6h-3z" fill="#111"/>
<path d="M6 744l12-12" stroke="#111" stroke-width="2"/><circle cx="6" cy="744" r="2" fill="none" stroke="#111"/><path d="M22 728l-8 2 6 6z" fill="#111"/>
<path d="M6 760h10v-4l8 7-8 7v-4H6z" fill="#111"/>
<path d="M10 782h7v9h4l-7.500 8-7.500-8h4z" fill="#ee1010"/>
<path d="M10 825v-9h-4l7.500-9 7.500 9h-4v9z" fill="#22a030" stroke="#156a20" stroke-width=".6"/>
<path d="M13 832l9 18H3z" fill="#f5b820" stroke="#a87a10"/><path d="M13 838v7M13 847v1.500" stroke="#a03010" stroke-width="1.800"/>
<path d="M4 867l5 9L24 859l-15 10-3-3z" fill="#48c848" stroke="#1e8a1e" stroke-width=".8"/>
<path d="M5 886l5-3 3 4 3-4 5 3-4 5 4 5-5 3-3-4-3 4-5-3 4-5z" fill="#ee1010"/>
<path d="M4 918h6v10H4zM11 918c2-2 4-6 4-9 3 0 3 3 2 8h5v4l-2 7h-9z" fill="#46c246" stroke="#1e8a1e" stroke-width=".7"/>
<path d="M4 938h8v10H4zM12 938h8l3 8-5 1c0 3 0 5-1 8-3 0-4-4-5-8z" fill="#ee1010"/>
<path d="M5 969c2-4 10-4 13 0" fill="none" stroke="#e89050" stroke-width="1.300"/><path d="M19 964h5M21.500 961.500v5" stroke="#1040e0"/>
<path d="M9 976l4 4 4-4z" fill="#111"/>
<circle cx="7" cy="1000" r="1.800" fill="#444"/><circle cx="13" cy="1000" r="1.800" fill="#444"/><circle cx="19" cy="1000" r="1.800" fill="#444"/><path d="M15 1005h7l-3.500 3.500z" fill="#111" stroke="#fff" stroke-width=".5"/>
</svg>

<!-- legend tabs -->
<div class="a" style="left:29px;top:73px;width:58px;height:16px;background:#c9d9e2;border:1px solid #8ea3ae;border-left:0"></div>
<div class="a" style="left:49px;top:73px;width:1px;height:18px;background:#8ea3ae"></div><div class="a" style="left:68px;top:73px;width:1px;height:18px;background:#8ea3ae"></div>
<div class="k" style="left:87px;width:39px"><b style="background:linear-gradient(90deg,#5fd35f 50%,#f07070 50%)"></b><i style="left:17px">Prix</i></div>
<div class="k" style="left:126px;width:71px"><b style="background:#6f6fff"></b><i>SMA (200)</i></div>
<div class="k" style="left:198px;width:64px"><b style="background:#8b0000"></b><i>SMA (50)</i></div>
<div class="k" style="left:263px;width:99px"><b style="background:linear-gradient(90deg,#000 33%,#0a7a0a 33%,#0a7a0a 66%,#b00000 66%)"></b><i>Points pivots (M)</i></div>
<div class="k" style="left:363px;width:96px"><b style="background:linear-gradient(90deg,#000 33%,#0a7a0a 33%,#0a7a0a 66%,#b00000 66%)"></b><i>Points pivots (J)</i></div>
<div class="k" style="left:460px;width:98px"><b style="background:linear-gradient(90deg,#000 33%,#0a7a0a 33%,#0a7a0a 66%,#b00000 66%)"></b><i>Points pivots (S)</i></div>
<div class="k" style="left:559px;width:106px"><b style="background:#000"></b><i>Plus Haut (M, Pré)</i></div>
<div class="k" style="left:666px;width:102px"><b style="background:#000"></b><i>Plus Bas (M, Pré)</i></div>
<div class="k" style="left:769px;width:101px"><b style="background:#000"></b><i>Plus Bas (S, Pré)</i></div>
<div class="k" style="left:871px;width:104px"><b style="background:#000"></b><i>Plus Haut (S, Pré)</i></div>
<div class="k" style="left:976px;width:102px"><b style="background:#000"></b><i>Plus Haut (J, Pré)</i></div>
<div class="k" style="left:1079px;width:99px"><b style="background:#000"></b><i>Plus Bas (J, Pré)</i></div>
<div class="k" style="left:1179px;width:107px"><b style="background:#dfe7ec;border:1px solid #9aa8b0;width:8px;height:9px"></b><i>Ichimoku (9 26 52)</i></div>
<div class="k" style="left:1287px;width:71px"><b style="background:#33ff00"></b><i>SMA (130)</i></div>
<div class="k" style="left:1359px;width:91px"><b style="background:#000"></b><i>Clôture (J, Pré)</i></div>
<div class="k" style="left:1451px;width:106px"><b style="background:#000"></b><i>Ouverture (J, Pré)</i></div>
<div class="k" style="left:1558px;width:110px"><b style="background:#00ff33"></b><i style="transform:scaleX(.84)">FRACTALE HAUTE</i></div>
<div class="k" style="left:1669px;width:44px"><i style="left:6px">Autres</i></div>
<svg width="100" height="100" viewBox="0 0 100 100" style="left:0;top:0">
<path d="M33 86c2-1 2-3 2-5 0-3 2-4 4-4s4 1 4 4c0 2 0 4 2 5z" fill="#d6d6d6" stroke="#777" stroke-width=".8"/>
<rect x="51" y="75" width="14" height="13" fill="#f4f6f8" stroke="#8ca0b0"/><path d="M56 77h4v4h2.500l-4.500 5-4.500-5h2.500z" fill="#e03030"/>
<rect x="70" y="75" width="14" height="13" fill="#f4f6f8" stroke="#8ca0b0"/><path d="M75 86v-4h-2.500l4.500-5 4.500 5h-2.500v4z" fill="#20a030"/>
</svg>

<!-- chart text labels -->
<span class="t" style="left:856px;top:87px">Haut (J, Pré)</span>
<span class="t" style="left:108px;top:162px">Ouv (J, Pré)</span>
<span class="t" style="left:108px;top:502px">Clo (J, Pré)</span>
<span class="t" style="left:857px;top:735px">Bas (J, Pré)</span>
<span class="t" style="left:1644px;top:148px;color:#e01010">R1 J</span>
<span class="t" style="left:1636px;top:295px;color:#e01010">mR1 J</span>
<span class="t" style="left:1643px;top:441px">Piv J</span>
<span class="t" style="left:1636px;top:618px;color:#107a10">mS1 J</span>
<span class="t" style="left:1794px;top:232px">Bas (M, Pré)</span>
<span class="t" style="left:1823px;top:325px;color:#107a10">mS1 S</span>
<span class="t" style="left:1830px;top:373px;color:#107a10">S1 M</span>
<span class="t" style="left:1795px;top:448px">Bas (S, Pré)</span>
<div class="a" style="left:1449px;top:250px;width:47px;height:21px;background:#f5f9ff;border:1px solid #3a78c8;border-radius:3px"></div>
<span class="t" style="left:1456px;top:254px">break??</span>
<span class="t" style="left:31px;top:755px;">© ProRealTime Trading  <em>Données en temps réel</em></span>

<!-- order tags -->
<div class="a" style="left:29px;top:95px;width:14px;height:20px;background:linear-gradient(#d85a5a,#b83a3a);border:1px solid #a03030;border-radius:3px 0 0 3px;box-sizing:border-box"></div>
<div class="a" style="left:43px;top:95px;width:114px;height:20px;background:linear-gradient(#ffa5a5,#f27f7f);border:1px solid #b83c3c;box-sizing:border-box"></div>
<div class="a" style="left:157px;top:95px;width:59px;height:20px;background:#f5f8f4;border:1px solid #a8b4ba;box-sizing:border-box"></div>
<div class="a" style="left:216px;top:95px;width:19px;height:20px;background:#f1f4f6;border:1px solid #a8b4ba;box-sizing:border-box"></div>
<span class="t" style="left:48px;top:98px">V:LMT  2 @ 15 960,00</span>
<span class="t" style="left:161px;top:98px;color:#0a7a1a">1 040,55 €</span>
<div class="a" style="left:29px;top:554px;width:14px;height:20px;background:linear-gradient(#d85a5a,#b83a3a);border:1px solid #a03030;border-radius:3px 0 0 3px;box-sizing:border-box"></div>
<div class="a" style="left:43px;top:554px;width:113px;height:20px;background:linear-gradient(#ffa5a5,#f27f7f);border:1px solid #b83c3c;box-sizing:border-box"></div>
<div class="a" style="left:156px;top:554px;width:55px;height:20px;background:#f5f8f4;border:1px solid #a8b4ba;box-sizing:border-box"></div>
<div class="a" style="left:211px;top:554px;width:18px;height:20px;background:#f1f4f6;border:1px solid #a8b4ba;box-sizing:border-box"></div>
<span class="t" style="left:48px;top:558px">V:STP  2 @ 15 589,00</span>
<span class="t" style="left:160px;top:558px;color:#a01010">-275,88 €</span>
<div class="a" style="left:29px;top:415px;width:80px;height:20px;background:linear-gradient(#c0f5b4,#9cec8c);border:1px solid #3cb83c;box-sizing:border-box"></div>
<div class="a" style="left:109px;top:415px;width:18px;height:20px;background:#f1f4f6;border:1px solid #a8b4ba;box-sizing:border-box"></div>
<span class="t" style="left:34px;top:418px;font-weight:bold">2 @ 15 666,75</span>
<div class="a" style="left:29px;top:435px;width:42px;height:18px;background:#f3f5f3;border:1px solid #a8b4ba;border-radius:0 0 3px 3px;box-sizing:border-box"></div>
<span class="t" style="left:34px;top:437px;font-size:12.5px;color:#0a7a1a;font-weight:bold">145,00</span>
<svg width="300" height="600" viewBox="0 0 300 600">
<path d="M221.500 101l8 9M229.500 101l-8 9M213.500 559.500l8 9M221.500 559.500l-8 9M114 420.500l8 9M122 420.500l-8 9" stroke="#d82a2a" stroke-width="2.600"/>
<path d="M36 98v14M36 98l-3 3.500h6zM36 112l-3-3.500h6zM36 557v14M36 557l-3 3.500h6zM36 571l-3-3.500h6z" stroke="#fff" stroke-width="1.600" fill="#fff"/>
</svg>

<!-- right axis price labels -->
<div class="b" style="top:94px"><i>15 851,80</i></div>
<div class="b" style="top:153px;color:#f01010"><i style="color:#f01010">15 818,07</i></div>
<div class="b" style="top:176px;height:14px"><i style="left:36px;top:0;color:#333">00</i></div>
<div class="a" style="left:1864px;top:167px;width:49px;height:13px;background:#ffc20e;border-top:1px solid #b89020;font-size:0"></div>
<span class="t" style="left:1866px;top:166px">15 811,75</span>
<div class="a" style="left:1864px;top:181px;width:36px;height:15px;background:#92ea92;border:0"></div>
<span class="t" style="left:1866px;top:181px;">9m30s</span>
<div class="b" style="top:235px"><i>15 771,10</i></div>
<div class="b" style="top:250px"><i style="color:#a01010">15 766,42</i></div>
<span class="t" style="left:1866px;top:277px">15 750</span>
<div class="b" style="top:301px"><i style="color:#f01010">15 736,50</i></div>
<div class="b" style="top:331px"><i style="color:#108a10">15 719,50</i></div>
<div class="a" style="left:1864px;top:354px;width:44px;height:14px;background:#ffff00;border:1px solid #a8a870"></div>
<span class="t" style="left:1866px;top:355px">15 707,0</span>
<div class="b" style="top:369px"><i style="color:#7a7aff">15 695,68</i></div>
<div class="b" style="top:384px"><i style="color:#108a10">15 692,67</i></div>
<div class="b" style="top:405px"><i style="color:#33f020">15 678,19</i></div>
<div class="b" style="top:443px"><i>15 654,93</i></div>
<div class="b" style="top:458px"><i>15 651,00</i></div>
<div class="b" style="top:508px"><i>15 621,20</i></div>
<span class="t" style="left:1866px;top:547px">15 600</span>
<div class="b" style="top:625px"><i style="color:#108a10">15 556,50</i></div>
<span class="t" style="left:1866px;top:637px">15 550</span>
<div class="b" style="top:741px"><i>15 491,80</i></div>
<span class="t" style="left:1866px;top:772px;font-weight:bold;font-size:13px">100</span>
<span class="t" style="left:1866px;top:796px">80</span>
<div class="b" style="top:820px;width:34px"><i>59,499</i></div>
<span class="t" style="left:1866px;top:842px">40</span>
<span class="t" style="left:1866px;top:865px">20</span>
<span class="t" style="left:1866px;top:906px">40</span>
<div class="b" style="top:917px;width:35px"><i style="color:#2020ff">20,338</i></div>
<div class="b" style="top:925px;width:35px"><i style="color:#5ee05e">17,027</i></div>
<div class="b" style="top:938px;width:35px"><i style="color:#f01030">3,2106</i></div>
<span class="t" style="left:1866px;top:957px">-20</span>
<span class="t" style="left:1866px;top:974px">-40</span>

<!-- RSI / MACD legends -->
<div class="a" style="left:29px;top:769px;width:58px;height:16px;background:#d3dfe6;border:1px solid #8ea3ae;border-left:0"></div>
<div class="a" style="left:32px;top:772px;width:10px;height:11px;background:#000"></div>
<span class="t" style="left:45px;top:770px">RSI (14)</span>
<div class="a" style="left:29px;top:901px;width:157px;height:16px;background:#d3dfe6;border:1px solid #8ea3ae;border-left:0"></div>
<div class="a" style="left:32px;top:904px;width:10px;height:11px;background:linear-gradient(90deg,#22b022 33%,#2020ee 33%,#2020ee 66%,#ee1010 66%)"></div>
<span class="t" style="left:45px;top:902px">MACD Zéro Retard (12 26 9)</span>

<!-- time axis -->
<span class="t" style="left:96px;top:1000px;font-weight:bold;font-size:13px">21</span>
<span class="t" style="left:156px;top:1000px">01:00</span><span class="t" style="left:221px;top:1000px">02:00</span><span class="t" style="left:286px;top:1000px">03:00</span><span class="t" style="left:352px;top:1000px">04:00</span><span class="t" style="left:417px;top:1000px">05:00</span><span class="t" style="left:482px;top:1000px">06:00</span><span class="t" style="left:547px;top:1000px">07:00</span><span class="t" style="left:613px;top:1000px">08:00</span><span class="t" style="left:678px;top:1000px">09:00</span><span class="t" style="left:743px;top:1000px">10:00</span><span class="t" style="left:809px;top:1000px">11:00</span><span class="t" style="left:874px;top:1000px">12:00</span><span class="t" style="left:939px;top:1000px">13:00</span><span class="t" style="left:1004px;top:1000px">14:00</span><span class="t" style="left:1070px;top:1000px">15:00</span><span class="t" style="left:1135px;top:1000px">16:00</span><span class="t" style="left:1200px;top:1000px">17:00</span><span class="t" style="left:1266px;top:1000px">18:00</span><span class="t" style="left:1331px;top:1000px">19:00</span><span class="t" style="left:1396px;top:1000px">20:00</span><span class="t" style="left:1461px;top:1000px">21:00</span><span class="t" style="left:1527px;top:1000px">22:00</span><span class="t" style="left:1592px;top:1000px">23:00</span>
<div class="a" style="left:1660px;top:1000px;width:120px;height:14px;background:#ffff00"></div>
<span class="t" style="left:1661px;top:1001px">mer. 22 déc. 2021 00:45</span>
<span class="t" style="left:1788px;top:1000px">02:00</span>

<!-- bottom toolbar -->
<div class="a" style="left:28px;top:1015px;width:1px;height:23px;background:#7e97a4"></div>
<div class="a" style="left:44px;top:1015px;width:86px;height:22px;background:#f7f8f8"></div>
<div class="a" style="left:131px;top:1015px;width:14px;height:22px;background:#f7f8f8"></div>
<div class="a" style="left:146px;top:1015px;width:21px;height:22px;background:#2e90e4"></div>
<div class="a" style="left:167px;top:1015px;width:75px;height:22px;background:#f7f8f8"></div>
<span class="t" style="left:73px;top:1019px;">Indicateurs</span>
<span class="t" style="left:193px;top:1019px;">Analyser</span>
<div class="a" style="left:385px;top:1019px;width:1335px;height:14px;background:#9bb8c5;border-top:1px solid #6f8794;border-bottom:1px solid #6f8794"></div>
<div class="a" style="left:385px;top:1019px;width:14px;height:16px;background:#b8d3de;border:1px solid #6f8794;box-sizing:border-box"></div>
<div class="a" style="left:1522px;top:1019px;width:194px;height:16px;background:linear-gradient(#bfdbe6,#a9cad9);border:1px solid #6f8794;box-sizing:border-box"></div>
<div class="a" style="left:1716px;top:1019px;width:14px;height:16px;background:#b8d3de;border:1px solid #6f8794;box-sizing:border-box"></div>
<svg width="1913" height="1076" viewBox="0 0 1913 1076">
<path d="M5 1036v-17l8 14 2-14M5 1036h9" fill="none" stroke="#2a2a2a"/><path d="M11 1036l2-6 7-9 2 2-7 9z" fill="#e8d040" stroke="#b08a10" stroke-width=".6"/>
<path d="M33 1027l3.500 3.500 3.500-3.500z" fill="#111"/><path d="M134.500 1027l3.500 3.500 3.500-3.500z" fill="#111"/>
<path d="M49 1025c3-7 7-7 9-3s6 4 10-3" fill="none" stroke="#2ca82c" stroke-width="1.400"/><path d="M49 1020c4 0 8 6 11 6s5-2 8-5" fill="none" stroke="#e04040" stroke-width="1.200"/>
<rect x="49" y="1031" width="19" height="6" fill="#2ca82c"/>
<circle cx="151" cy="1026" r="2.500" fill="#fff"/><circle cx="161" cy="1020" r="2.500" fill="#fff"/><circle cx="161" cy="1032" r="2.500" fill="#fff"/><path d="M151 1026L161 1020M151 1026L161 1032" stroke="#fff" stroke-width="1.400"/>
<path d="M175 1019h-5v16h5" fill="none" stroke="#1a3040" stroke-width="2"/><path d="M182 1019h5v16h-5" fill="none" stroke="#556a78" stroke-width="2"/>
<rect x="248" y="1018" width="11" height="12" fill="#fff" stroke="#6a8a9a"/><path d="M250 1025h13v8h-6l-3 4v-4h-4z" fill="#2a78d8"/><path d="M253 1029h1M256 1029h1M259 1029h1" stroke="#fff"/>
<rect x="275" y="1019" width="12" height="17" fill="#f6f6f6" stroke="#4a5a60"/><path d="M277 1023h8M277 1027h8M277 1031h8" stroke="#3a8a3a"/><path d="M276 1035l8-7" stroke="#c03030"/>
<path d="M304 1017v21" stroke="#1a6a1a"/><path d="M298 1020h13v4h-13zM298 1026h15v4h-15zM298 1032h11v4h-11z" fill="#4ac04a" stroke="#1a7a1a"/>
<rect x="321" y="1018" width="12" height="11" fill="#eaf0fb" stroke="#2a5ad0"/><rect x="328" y="1025" width="12" height="12" fill="#eaf0fb" stroke="#2a5ad0"/><path d="M323 1025l3-3 3 3M330 1033l3-4 4 3" fill="none" stroke="#2ca82c"/>
<path d="M357 1017v21" stroke="#1a6a1a"/><rect x="353" y="1021" width="9" height="12" fill="#4ac04a" stroke="#1a7a1a"/><rect x="347" y="1027" width="6" height="9" fill="#f07070" stroke="#a02020"/><path d="M351 1036l8-8c-1-3 1-5 4-4l-2 2 1 1 2-2c0 3-2 5-4 4l-7 8z" fill="#fff" stroke="#111" stroke-width=".8"/>
<path d="M376 1021l-4 5 4 5M380 1021l-4 5 4 5" fill="none" stroke="#6a7a85" stroke-width="1.200"/>
<path d="M394 1023v8l-4-4z" fill="#111"/><path d="M1721 1023v8l4-4z" fill="#111"/>
<rect x="1743" y="1021" width="14" height="13" fill="#fff" stroke="#aaa"/><rect x="1743" y="1019" width="14" height="4" fill="#3a8ad8"/><path d="M1748 1023v10M1752 1023v10M1743 1027h14" stroke="#e08080" stroke-width=".7"/><path d="M1736 1032l6-5v3h6v5h-6v3z" fill="#34c034" stroke="#1c801c" stroke-width=".6"/>
<path d="M1770 1023l5-4v3c5 0 8 3 7 8-.5 2-1 4-3 6 1-5-1-8-4-8v3z" fill="#1a78d8"/>
<path d="M1808 1023l-5-4v3c-5 0-8 3-7 8 .5 2 1 4 3 6-1-5 1-8 4-8v3z" fill="#5f9ad8"/>
<circle cx="1825" cy="1025" r="5.500" fill="#dde3e7" stroke="#222" stroke-width="1.300"/><path d="M1829 1030l5 6" stroke="#111" stroke-width="2.400"/><path d="M1833 1019v9M1819 1036h9" stroke="#1a48d0" stroke-width="1.200"/>
<circle cx="1850" cy="1025" r="5.500" fill="#eef2f6" stroke="#222" stroke-width="1.300"/><path d="M1854 1030l6 6" stroke="#111" stroke-width="2.400"/><path d="M1847 1025h6" stroke="#1a48d0" stroke-width="2"/>
<circle cx="1876" cy="1025" r="5.500" fill="#eef2f6" stroke="#222" stroke-width="1.300"/><path d="M1880 1030l6 6" stroke="#111" stroke-width="2.400"/><path d="M1873 1025h6M1876 1022v6" stroke="#1a48d0" stroke-width="2"/>
<rect x="1895" y="1021" width="18" height="6" fill="#eef2f6" stroke="#778"/><path d="M1897 1024h14" stroke="#333" stroke-dasharray="2 1" stroke-width="2"/><path d="M1904 1027v6h-2l3 3 3-3h-2v-6z" fill="#1a78d8"/>
</svg>

<!-- taskbar -->
<div class="a" style="left:0;top:1039px;width:1913px;height:37px;background:linear-gradient(90deg,#e4eef2 0,#eef3f0 20%,#eef1e2 28%,#e6eaea 40%,#e6e9ec 50%,#d8d9d9 58%,#d3d3d3 75%,#d6d6d2 90%,#dfe3d3 100%)"></div>
<div class="a" style="left:46px;top:1040px;width:343px;height:36px;background:#fff"></div>
<div class="a" style="left:733px;top:1039px;width:45px;height:37px;background:#f4f5f7"></div>
<span class="t" style="left:85px;top:1053px;font-size:15px;line-height:16px;color:#333">Taper ici pour rechercher</span>
<span class="t" style="left:1815px;top:1044px;color:#222;">18:20</span>
<span class="t" style="left:1799px;top:1062px;color:#222;font-size:13.3px">21/12/2021</span>
<svg width="1913" height="1076" viewBox="0 0 1913 1076">
<path d="M13 1054l7-1v7h-7zM21.500 1053l8-1.500v8.500h-8zM13 1061h7v7l-7-1zM21.500 1061h8v8.500l-8-1.500z" fill="#000"/>
<circle cx="67" cy="1057" r="5.500" fill="none" stroke="#222" stroke-width="1.300"/><path d="M63 1062l-5 6" stroke="#222" stroke-width="1.400"/>
<circle cx="412.500" cy="1060" r="6" fill="none" stroke="#111" stroke-width="2.400"/>
<path d="M454 1053h13M454 1068h13M456 1056h9v9h-9zM468 1056v2M468 1062v3" fill="none" stroke="#222" stroke-width="1.300"/>
<path d="M501 1052h8l2 2h11v16h-21z" fill="#f6c342"/><path d="M501 1058h21v12h-21z" fill="#fbd560"/><rect x="507" y="1063" width="9" height="7" fill="#1a7ad8"/><rect x="510" y="1066" width="3" height="4" fill="#fbd560"/>
<circle cx="561" cy="1060" r="12" fill="#0f76cf"/><path d="M549 1060c0-7 6-12 12-12 6 0 12 5 12 11 0 4-3 6-6 6h-7c1 3 5 4 9 3-3 4-9 5-13 3-4-3-3-7-2-11-1-1-4 0-5 0z" fill="#33c7c0"/><path d="M556 1060c2-5 9-6 11-1 0 1-1 2-2 2z" fill="#0f76cf"/><path d="M553 1070c4 3 10 3 14 0-5 1-10 0-14-4z" fill="#7ee04a"/>
<path d="M598 1056l12-8 12 8v15h-24z" fill="#1b9de2"/><path d="M598 1056l12 8 12-8v-0l-12-8z" fill="#fff"/>
<rect x="648" y="1053" width="5" height="16" fill="#3a80e8"/><rect x="664" y="1053" width="5" height="16" fill="#2aa84a"/><path d="M648 1053h4l6.500 6 6.500-6h4l-10.500 10z" fill="#e83030"/><path d="M664 1053l5 0 0 4z" fill="#f8c020"/>
<rect x="697" y="1052" width="21" height="16" rx="4" fill="#ff0000"/><path d="M705 1056.500v7l6-3.500z" fill="#fff"/>
<path d="M751 1056v20M763 1050v24" stroke="#333"/><rect x="747" y="1058" width="7" height="11" fill="#606872" stroke="#222"/><rect x="759" y="1052" width="8" height="17" fill="#96d80a" stroke="#6a8a10"/>
<rect x="1615" y="1053" width="21" height="15" fill="none" stroke="#222" stroke-width="1.500"/><rect x="1618" y="1058" width="6" height="6" fill="none" stroke="#222"/><path d="M1627 1057h7M1627 1061h7M1627 1065h7M1618 1055.500h15" stroke="#222"/>
<path d="M1656 1063l5.500-5 5.500 5" fill="none" stroke="#222" stroke-width="1.300"/>
<rect x="1682" y="1055" width="8" height="11" rx="2" fill="none" stroke="#222"/><path d="M1690 1059l3-2v7l-3-2M1683 1052h7M1683 1069h7" fill="none" stroke="#222"/>
<path d="M1704 1066c-3 0-3-5 0-5 1-4 7-5 9-1 4 0 5 6 1 6z" fill="#555" stroke="#fff" stroke-width=".6"/>
<rect x="1727" y="1053" width="13" height="14" fill="none" stroke="#222" stroke-width="1.200"/><path d="M1731 1060l5-4M1733 1063h3" stroke="#222"/><circle cx="1738.500" cy="1064.500" r="3" fill="#ee1111"/>
<path d="M1753 1067a12 12 0 0 1 12-12M1756 1067a9 9 0 0 1 9-9M1759 1067a6 6 0 0 1 6-6M1762 1067a3 3 0 0 1 3-3" fill="none" stroke="#444"/>
<path d="M1775 1058h3l4-4v13l-4-4h-3z" fill="none" stroke="#222"/><path d="M1785 1058c1 2 1 4 0 6M1788 1056c2 3 2 7 0 10" fill="none" stroke="#777"/>
<path d="M1877 1053h15v11h-8l-3 3v-3h-4z" fill="#111"/><path d="M1880 1056h9M1880 1059h9" stroke="#fff"/>
<circle cx="1891" cy="1067" r="7" fill="#d5d5d5" stroke="#555"/><text x="1888" y="1071" font-family="'Liberation Sans',sans-serif" font-size="11" fill="#111">4</text>
</svg>
</div></body></html>
